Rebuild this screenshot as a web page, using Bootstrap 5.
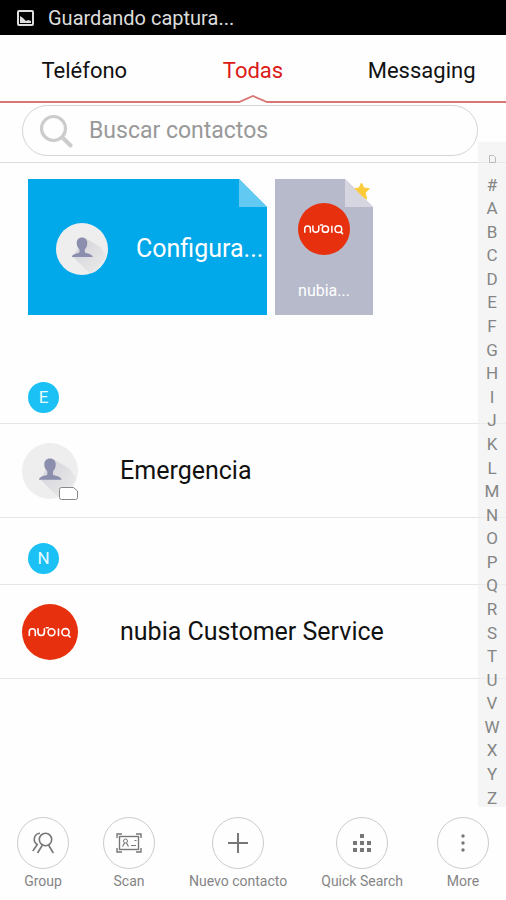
<!DOCTYPE html>
<html lang="es">
<head>
<meta charset="utf-8">
<meta name="viewport" content="width=device-width, initial-scale=1">
<title>Contactos</title>
<link rel="stylesheet" href="https://cdn.jsdelivr.net/npm/bootstrap@5.3.0/dist/css/bootstrap.min.css">
<style>
  body { font-family: Roboto, "Liberation Sans", sans-serif; color: #111; background: #fefefe; }
  svg { display: block; flex: none; }
  .status-bar { height: 35px; background: #000; color: #ddd; font-size: 20px; padding: 0 17px; gap: 14px; }
  .tab-link { height: 60px; padding-top: 10px; font-size: 22px; color: #111; }
  .tab-link.active { color: #dc1a17; }
  .tab-rule { height: 8px; }
  .tab-rule span { height: 2px; background: #d97774; }
  .search-area { padding: 2px 28px 6px 22px; border-bottom: 1px solid #ddd; }
  .search-pill { height: 51px; border: 1px solid #d4d4d4; border-radius: 26px; padding: 0 16px; gap: 16px; }
  .search-pill input { font-size: 23px; color: #555; padding: 2px 0 0; }
  .search-pill input::placeholder { color: #999; opacity: 1; }
  .favourites { padding: 16px 28px 42px; gap: 8px; }
  .tile { height: 136px; color: #fff; }
  .tile-wide { width: 239px; background: #02a9ea; padding: 4px 2px 0 28px; gap: 28px; font-size: 25px; }
  .tile-small { width: 98px; background: #b7bacb; padding-top: 24px; gap: 24px; font-size: 16px; line-height: 24px; }
  .tile .fold { position: absolute; top: 0; right: 0; }
  .section-head { padding: 25px 28px 10px; border-bottom: 1px solid #e6e6e6; }
  .letter { width: 31px; height: 31px; background: #1bc1f4; color: #e9faff; font-size: 17px; }
  .contact { height: 94px; padding: 0 22px; gap: 42px; border-bottom: 1px solid #e6e6e6; font-size: 25px; color: #111; }
  .sim { position: absolute; right: -1px; bottom: -1px; }
  .index-rail { position: absolute; top: 142px; right: 0; bottom: 0; width: 28px; background: rgba(238,238,238,.6); padding: 5px 0 0; }
  .index-rail a { flex: 1 1 0; min-height: 0; font-size: 17px; line-height: 28px; color: #858585; }
  .screen { height: 807px; }
  .action-bar { padding: 10px 17px 11px; }
  .action { font-size: 14px; line-height: 20px; color: #858585; gap: 2px; }
  .ring { width: 52px; height: 52px; border: 1px solid #ccc; }
</style>
<script src="https://cdn.jsdelivr.net/npm/bootstrap@5.3.0/dist/js/bootstrap.bundle.min.js"></script>
</head>
<body class="min-vh-100 d-flex flex-column">
<svg width="0" height="0" class="position-absolute" aria-hidden="true">
  <defs>
    <clipPath id="disc"><circle cx="28" cy="28" r="28"/></clipPath>
    <linearGradient id="shade" x1="0" y1="0" x2="1" y2="1"><stop offset="0.3" stop-color="#d9d9de"/><stop offset="1" stop-color="#eee"/></linearGradient>
    <symbol id="person" viewBox="0 0 56 56">
      <circle cx="28" cy="28" r="28" fill="#eee"/>
      <path clip-path="url(#disc)" fill="url(#shade)" d="M31 16 L48 26 L54 36 L40 56 L34 52 L18 36Z"/>
      <path fill="#8b8fad" d="M28 15.500c3.600 0 5.700 2.500 5.700 6 0 3.300-1.200 5.300-2.700 6.800v3.200c0 1.300 8.500 1.300 8.500 5.200h-22.500c0-3.900 8.300-3.900 8.300-5.200v-3.200c-1.600-1.500-3-3.500-3-6.800 0-3.500 2.100-6 5.700-6z"/>
    </symbol>
    <symbol id="nubia" viewBox="0 0 56 56">
      <circle cx="28" cy="28" r="28" fill="#e7310e"/>
      <g fill="none" stroke="#fff" stroke-width="1.600" stroke-linecap="round">
        <path d="M7.300 31.500v-3.700a3 3 0 0 1 6 0v3.700"/>
        <path d="M16 24.800v3.500a3.200 3.200 0 0 0 6.400 0v-3.500"/>
        <circle cx="29.500" cy="28.200" r="3.400"/>
        <path d="M24.300 23.700h2M36.500 25V31.500"/>
        <circle cx="43.500" cy="28.200" r="3.600"/>
        <path d="M46.500 31.500l1.500 1.500"/>
      </g>
    </symbol>
  </defs>
</svg>

<div class="screen position-relative">
  <header>
    <div class="status-bar d-flex align-items-center">
      <svg width="17" height="16" viewBox="0 0 17 16"><rect x="1" y="1" width="15" height="14" rx="1" fill="none" stroke="#ddd" stroke-width="2"/><path fill="#ddd" d="M3 13V6l3 2 3 3 2-1 3 1v2z"/></svg>
      <span>Guardando captura...</span>
    </div>
    <nav class="d-flex text-center">
      <a href="#" class="tab-link col-4 d-flex align-items-center justify-content-center text-decoration-none">Teléfono</a>
      <a href="#" class="tab-link active col-4 d-flex align-items-center justify-content-center text-decoration-none" aria-current="page">Todas</a>
      <a href="#" class="tab-link col-4 d-flex align-items-center justify-content-center text-decoration-none">Messaging</a>
    </nav>
    <div class="tab-rule d-flex align-items-end">
      <span class="flex-fill"></span>
      <svg width="32" height="8" viewBox="0 0 32 8"><path d="M0 7h2L16 1l14 6h2" fill="none" stroke="#d97774" stroke-width="1.800"/></svg>
      <span class="flex-fill"></span>
    </div>
  </header>

  <main>
    <div class="search-area">
      <div class="search-pill d-flex align-items-center">
        <svg width="34" height="34" viewBox="0 0 34 34" fill="none" stroke="#ccc"><circle cx="14.500" cy="14.500" r="12" stroke-width="3.200"/><path d="M23.500 23.500l8 8" stroke-width="4" stroke-linecap="round"/></svg>
        <input type="text" class="form-control border-0 bg-transparent shadow-none" placeholder="Buscar contactos" aria-label="Buscar contactos">
      </div>
    </div>

    <div class="favourites d-flex">
      <button type="button" class="tile tile-wide position-relative border-0 d-flex align-items-center text-start">
        <svg width="52" height="52"><use href="#person"/></svg>
        <span>Configura...</span>
        <svg class="fold" width="28" height="28" viewBox="0 0 28 28"><path fill="#fefefe" d="M0 0h28v28z"/><path fill="#62c9f3" d="M0 0l28 28H0z"/></svg>
      </button>
      <button type="button" class="tile tile-small position-relative border-0 px-0 d-flex flex-column align-items-center justify-content-start">
        <svg width="52" height="52"><use href="#nubia"/></svg>
        <span>nubia...</span>
        <svg class="fold" width="28" height="28" viewBox="0 0 28 28"><path fill="#fefefe" d="M0 0h28v28z"/><path fill="#fccb3a" stroke="#fccb3a" stroke-linejoin="round" d="M16.500 4l2.300 5 5.500.7-4 3.800 1.300 6.500-4.800-3-5.200 2 1-5.500-4-3.800 5.500-.7z"/><path fill="#d5d6e0" d="M0 0l28 28H0z"/></svg>
      </button>
    </div>

    <section>
      <div class="section-head"><div class="letter rounded-circle d-flex align-items-center justify-content-center">E</div></div>
      <a href="#" class="contact d-flex align-items-center text-decoration-none">
        <span class="position-relative">
          <svg width="56" height="56"><use href="#person"/></svg>
          <svg class="sim" width="20" height="13" viewBox="0 0 20 13"><path d="M2.500.5h12l4 3.500v6.500a2 2 0 0 1-2 2h-14a2 2 0 0 1-2-2v-8a2 2 0 0 1 2-2z" fill="#fff" stroke="#888"/></svg>
        </span>
        <span>Emergencia</span>
      </a>
    </section>
    <section>
      <div class="section-head"><div class="letter rounded-circle d-flex align-items-center justify-content-center">N</div></div>
      <a href="#" class="contact d-flex align-items-center text-decoration-none">
        <svg width="56" height="56"><use href="#nubia"/></svg>
        <span>nubia Customer Service</span>
      </a>
    </section>
  </main>

  <nav class="index-rail d-flex flex-column text-center" aria-label="Índice">
    <a href="#" class="d-flex align-items-center justify-content-center" aria-label="SIM"><svg width="7" height="8" viewBox="0 0 7 8"><path d="M.5.500h4l2 2v5h-6z" fill="none" stroke="#bbb"/></svg></a>
    <a href="#" class="text-decoration-none">#</a><a href="#" class="text-decoration-none">A</a><a href="#" class="text-decoration-none">B</a><a href="#" class="text-decoration-none">C</a><a href="#" class="text-decoration-none">D</a><a href="#" class="text-decoration-none">E</a><a href="#" class="text-decoration-none">F</a><a href="#" class="text-decoration-none">G</a><a href="#" class="text-decoration-none">H</a><a href="#" class="text-decoration-none">I</a><a href="#" class="text-decoration-none">J</a><a href="#" class="text-decoration-none">K</a><a href="#" class="text-decoration-none">L</a><a href="#" class="text-decoration-none">M</a><a href="#" class="text-decoration-none">N</a><a href="#" class="text-decoration-none">O</a><a href="#" class="text-decoration-none">P</a><a href="#" class="text-decoration-none">Q</a><a href="#" class="text-decoration-none">R</a><a href="#" class="text-decoration-none">S</a><a href="#" class="text-decoration-none">T</a><a href="#" class="text-decoration-none">U</a><a href="#" class="text-decoration-none">V</a><a href="#" class="text-decoration-none">W</a><a href="#" class="text-decoration-none">X</a><a href="#" class="text-decoration-none">Y</a><a href="#" class="text-decoration-none">Z</a>
  </nav>
</div>

<footer class="action-bar d-flex justify-content-between">
  <button type="button" class="action border-0 bg-transparent p-0 d-flex flex-column align-items-center">
    <span class="ring rounded-circle d-flex align-items-center justify-content-center"><svg width="22" height="22" viewBox="0 0 22 22" fill="none" stroke="#777" stroke-width="1.600"><circle cx="13.500" cy="7.500" r="6.200"/><path d="M10.500 13L5.500 21M16.500 13l4.800 8M8 1.300A6 6 0 0 0 5.300 12.500L.8 19"/></svg></span>
    Group
  </button>
  <button type="button" class="action border-0 bg-transparent p-0 d-flex flex-column align-items-center">
    <span class="ring rounded-circle d-flex align-items-center justify-content-center"><svg width="26" height="20" viewBox="0 0 26 20" fill="none" stroke="#777"><path stroke-width="1.400" d="M1 5V1h5M20 1h5v4M25 15v4h-5M6 19H1v-4"/><rect x="3.500" y="3.500" width="19" height="13" stroke-width="1.400"/><circle cx="9.500" cy="8" r="2"/><path d="M8.500 10l-2 3.500M10.500 10l2 3.500M15 12.500h5M18.500 7.500h2" stroke-width="1.200"/></svg></span>
    Scan
  </button>
  <button type="button" class="action border-0 bg-transparent p-0 d-flex flex-column align-items-center">
    <span class="ring rounded-circle d-flex align-items-center justify-content-center"><svg width="20" height="20" viewBox="0 0 20 20"><path d="M10 0v20M0 10h20" stroke="#777" stroke-width="2"/></svg></span>
    Nuevo contacto
  </button>
  <button type="button" class="action border-0 bg-transparent p-0 d-flex flex-column align-items-center">
    <span class="ring rounded-circle d-flex align-items-center justify-content-center"><svg width="18" height="18" viewBox="0 0 18 18"><path fill="#777" d="M7 0h4v4H7zM0 7h4v4H0zM7 7h4v4H7zM14 7h4v4h-4zM0 14h4v4H0zM7 14h4v4H7zM14 14h4v4h-4z"/></svg></span>
    Quick Search
  </button>
  <button type="button" class="action border-0 bg-transparent p-0 d-flex flex-column align-items-center">
    <span class="ring rounded-circle d-flex align-items-center justify-content-center"><svg width="4" height="18" viewBox="0 0 4 18" fill="#777"><circle cx="2" cy="2" r="1.700"/><circle cx="2" cy="9" r="1.700"/><circle cx="2" cy="16" r="1.700"/></svg></span>
    More
  </button>
</footer>
</body>
</html>
